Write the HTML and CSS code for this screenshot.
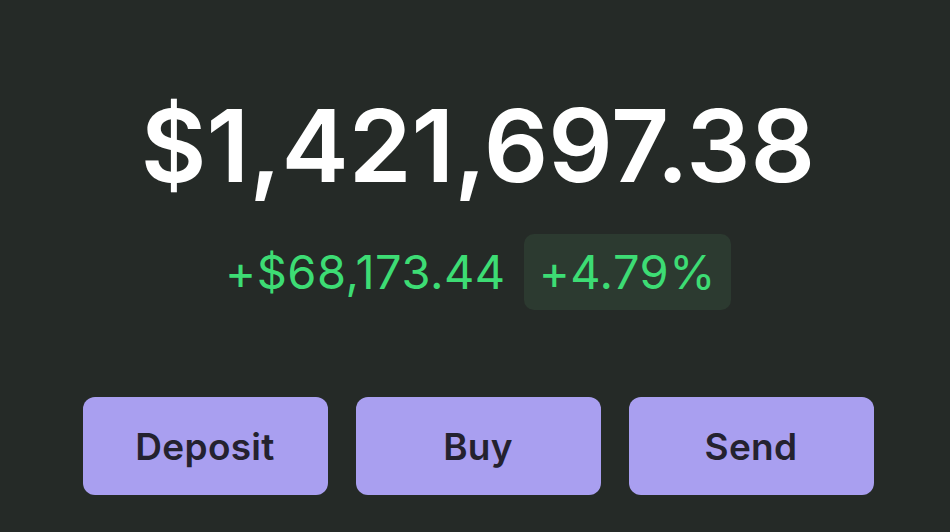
FILE: index.html
```html
<!DOCTYPE html>
<html lang="en">

<head>
    <meta charset="UTF-8">
    <meta name="viewport" content="width=device-width, initial-scale=1.0">
    <title>Balance</title>
    <link rel="stylesheet" href="styles.css">
</head>

<body>
    <div class="wallet">
        <div class="balance">$1,421,697.38</div>
        <div class="change-row">
            <span class="change">+$68,173.44</span>
            <span class="change-badge">+4.79%</span>
        </div>
        <div class="actions">
            <button class="action-btn">Deposit</button>
            <button class="action-btn">Buy</button>
            <button class="action-btn">Send</button>
        </div>
    </div>
</body>

</html>
```

FILE: styles.css
```css
body{
    margin: 0;
    background-color: #252a27;
    font-family: Inter, "Noto Sans", sans-serif;
}

.wallet{
    display: flex;
    flex-direction: column;
    align-items: center;
    padding: 95px 0 0 6px;
    height: 532px;
    box-sizing: border-box;
}

.balance{
    color: #ffffff;
    font-size: 101px;
    font-weight: 600;
    line-height: 100px;
}

.change-row{
    display: flex;
    align-items: center;
    gap: 18px;
    margin-top: 39px;
}

.change, .change-badge{
    color: #3ddc74;
    font-size: 47px;
    font-weight: 400;
    line-height: 56px;
    letter-spacing: 0.5px;
}

.change-badge{
    background-color: #2c3a30;
    border-radius: 10px;
    padding: 10px 15px;
}

.actions{
    display: flex;
    gap: 28px;
    margin-top: 87px;
}

.action-btn{
    width: 245px;
    height: 98px;
    border: none;
    border-radius: 12px;
    background-color: #a99ff0;
    color: #24222f;
    font-family: Inter, "Noto Sans", sans-serif;
    font-size: 37px;
    font-weight: 600;
    letter-spacing: 0.3px;
}
```
